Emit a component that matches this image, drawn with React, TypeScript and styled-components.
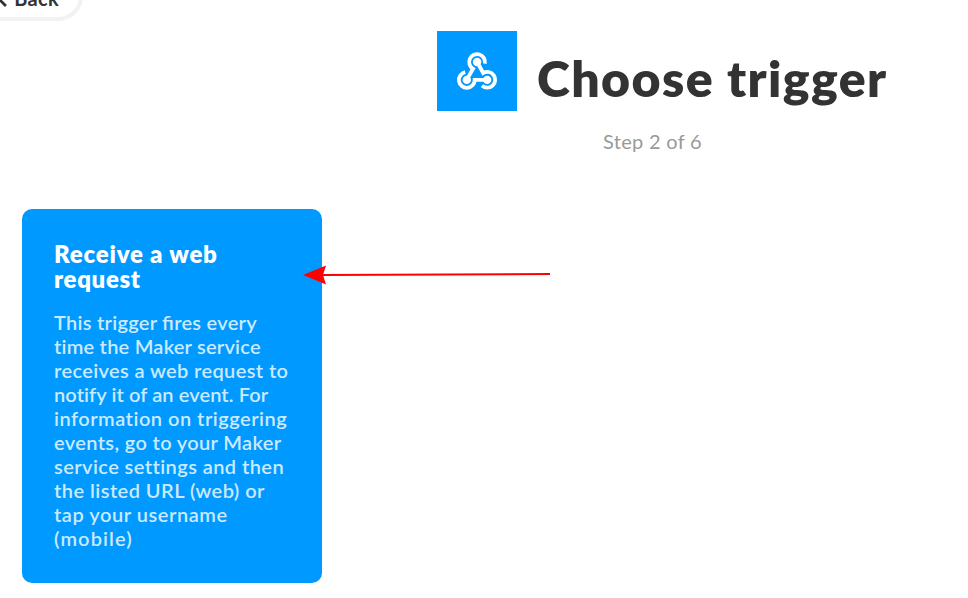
import React from 'react';
import styled, { createGlobalStyle } from 'styled-components';

const GlobalStyle = createGlobalStyle`
  * { box-sizing: border-box; }
  body {
    margin: 0;
    background: #fff;
    color: #333;
    font-family: Lato, "Open Sans", sans-serif;
    overflow: hidden;
  }
`;

const Page = styled.main`
  position: relative;
  display: flex;
  flex-direction: column;
  align-items: flex-start;
  width: 968px;
  height: 598px;
  overflow: hidden;
`;

const BackButton = styled.button`
  display: flex;
  align-items: center;
  gap: 6px;
  height: 50px;
  margin: -29px 0 0 -30px;
  padding: 4px 20px 0 22px;
  width: 113px;
  border: 4px solid #f2f2f2;
  border-radius: 25px;
  background: #fff;
  color: #333;
  font: 700 20px/24px Lato, sans-serif;
  letter-spacing: 0.3px;
  white-space: nowrap;
`;

const Header = styled.header`
  display: flex;
  flex-direction: column;
  align-items: center;
  width: 450px;
  margin: 10px 0 0 437px;
`;

const TitleRow = styled.div`
  display: flex;
  gap: 20px;
  width: 100%;
  height: 80px;
`;

const ServiceTile = styled.div`
  display: flex;
  flex: none;
  align-items: center;
  justify-content: center;
  width: 80px;
  height: 80px;
  background: #09f;
`;

const Title = styled.h1`
  margin: 17px 0 0;
  font-size: 50px;
  font-weight: 800;
  line-height: 60px;
  letter-spacing: 1.4px;
  white-space: nowrap;
`;

const Step = styled.p`
  margin: 18px 19px 0 0;
  color: #999;
  font-size: 20px;
  line-height: 24px;
  letter-spacing: 0.3px;
`;

const Card = styled.section`
  width: 300px;
  height: 374px;
  margin: 56px 0 0 22px;
  padding: 32px;
  border-radius: 10px;
  background: #09f;
`;

const CardTitle = styled.h2`
  margin: 0 0 19px;
  color: #fff;
  font-size: 24px;
  font-weight: 800;
  line-height: 25px;
`;

const CardText = styled.p`
  margin: 0;
  color: #cceaff;
  font-size: 20px;
  font-weight: 600;
  line-height: 24px;
`;

const Line = styled.span<{ $spacing: number }>`
  display: block;
  letter-spacing: ${(p) => p.$spacing}px;
  white-space: nowrap;

  &:first-child {
    font-feature-settings: "liga" 1;
  }
`;

const Arrow = styled.svg`
  position: absolute;
  left: 300px;
  top: 260px;
`;

const titleLines: [string, number][] = [
  ['Receive a web', 0.8],
  ['request', 0.65],
];

const textLines: [string, number][] = [
  ['This trigger fires every', 0.27],
  ['time the Maker service', 0.23],
  ['receives a web request to', 0.38],
  ['notify it of an event. For', 0.1],
  ['information on triggering', 0.5],
  ['events, go to your Maker', 0.36],
  ['service settings and then', 0.43],
  ['the listed URL (web) or', 0.46],
  ['tap your username', 0.55],
  ['(mobile)', 1.1],
];

const renderLines = (lines: [string, number][]) =>
  lines.map(([text, spacing]) => (
    <Line key={text} $spacing={spacing}>
      {text}{' '}
    </Line>
  ));

const WebhooksIcon = () => (
  <svg width="42" height="40" viewBox="0 0 42 40" fill="none" stroke="#fff">
    <g strokeWidth="3.8">
      <path d="M28.8 12.6A7.9 7.9 0 1 0 17 17.8L11.4 27.6" />
      <path d="M9.2 21.2A7.9 7.9 0 1 0 18.7 28.9H30.5" />
      <path d="M21.1 10.8L27.2 22A7.9 7.9 0 1 1 26 34.6" />
    </g>
    <g fill="#fff" stroke="none">
      <circle cx="21.1" cy="11" r="4.2" />
      <circle cx="10.8" cy="28.9" r="4.2" />
      <circle cx="31.2" cy="28.9" r="4.2" />
    </g>
  </svg>
);

export default function App() {
  return (
    <>
      <GlobalStyle />
      <Page>
        <BackButton>
          <svg width="13" height="20" viewBox="0 0 13 20" fill="none" stroke="#333" strokeWidth="3">
            <path d="M10 2L2 10L10.5 18.5" />
          </svg>
          Back
        </BackButton>
        <Header>
          <TitleRow>
            <ServiceTile>
              <WebhooksIcon />
            </ServiceTile>
            <Title>Choose trigger</Title>
          </TitleRow>
          <Step>Step 2 of 6</Step>
        </Header>
        <Card>
          <CardTitle>{renderLines(titleLines)}</CardTitle>
          <CardText>{renderLines(textLines)}</CardText>
        </Card>
        <Arrow width="252" height="30" viewBox="0 0 252 30">
          <path d="M22 15L250 14" stroke="#f00" strokeWidth="2" />
          <path d="M3 15L26 5.5L23 15L26 24.5Z" fill="#f00" />
        </Arrow>
      </Page>
    </>
  );
}
